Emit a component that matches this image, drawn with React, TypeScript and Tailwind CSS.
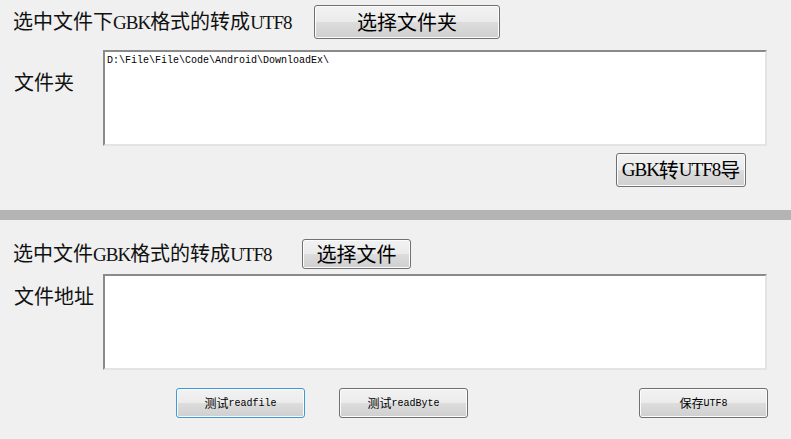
import React from "react";

const F = { fontFamily: '"Noto Sans CJK SC", "Liberation Serif", serif' };

function L({ children }: { children: React.ReactNode }) {
  return (
    <span className="text-[19px] tracking-[-1px]" style={{ fontFamily: '"Liberation Serif", serif' }}>
      {children}
    </span>
  );
}

function S({ children }: { children: React.ReactNode }) {
  return (
    <span className="text-[10px]" style={{ fontFamily: '"Liberation Mono", monospace' }}>
      {children}
    </span>
  );
}

function Btn({
  className = "",
  children,
  focus = false,
}: {
  className?: string;
  children: React.ReactNode;
  focus?: boolean;
}) {
  return (
    <div
      className={
        "flex items-center justify-center rounded-[3px] border text-black bg-[linear-gradient(to_bottom,#f2f2f2_0%,#ebebeb_50%,#dddddd_50%,#cfcfcf_100%)] shadow-[inset_0_0_0_1px_#fcfcfc] " +
        (focus ? "border-[#3c9ad8] " : "border-[#707070] ") +
        className
      }
      style={F}
    >
      {children}
    </div>
  );
}

function Box({ className = "", children }: { className?: string; children?: React.ReactNode }) {
  return (
    <div
      className={
        "bg-white border-t-2 border-l-2 border-t-[#8a8a8a] border-l-[#8a8a8a] border-r-2 border-b-2 border-r-[#e3e3e3] border-b-[#e3e3e3] " +
        className
      }
    >
      {children}
    </div>
  );
}

export default function App() {
  return (
    <div className="w-[791px] h-[439px] bg-[#f0f0f0] overflow-hidden text-[#111]" style={F}>
      <div className="h-[210px] flex flex-col">
        <div className="flex items-center pt-[5px]">
          <div className="w-[314px] pl-[13px] text-[20px] leading-[28px] whitespace-nowrap">
            选中文件下<L>GBK</L>格式的转成<L>UTF8</L>
          </div>
          <Btn className="w-[186px] h-[34px] text-[20px]">选择文件夹</Btn>
        </div>
        <div className="flex mt-[11px]">
          <div className="w-[103px] pl-[14px] pt-[18px] text-[20px] leading-[28px]">文件夹</div>
          <Box className="w-[664px] h-[96px] pl-[2px] pt-[3px]">
            <div className="text-[10px] leading-[12px] text-black" style={{ fontFamily: '"Liberation Mono", monospace' }}>
              D:\File\File\Code\Android\DownloadEx\
            </div>
          </Box>
        </div>
        <div className="flex justify-end pr-[45px] mt-[7px]">
          <Btn className="w-[130px] h-[34px] text-[20px]">
            <L>GBK</L>转<L>UTF8</L>导
          </Btn>
        </div>
      </div>
      <div className="h-[10px] bg-[#b4b4b4]" />
      <div className="flex flex-col">
        <div className="flex items-center mt-[19px]">
          <div className="w-[302px] pl-[13px] text-[20px] leading-[28px] whitespace-nowrap">
            选中文件<L>GBK</L>格式的转成<L>UTF8</L>
          </div>
          <Btn className="w-[109px] h-[30px] text-[20px]">选择文件</Btn>
        </div>
        <div className="flex mt-[5px]">
          <div className="w-[103px] pl-[14px] pt-[8px] text-[20px] leading-[28px]">文件地址</div>
          <Box className="w-[664px] h-[96px]" />
        </div>
        <div className="flex mt-[18px]">
          <div className="w-[176px]" />
          <Btn focus className="w-[129px] h-[30px] text-[12px]">
            测试<S>readfile</S>
          </Btn>
          <div className="w-[34px]" />
          <Btn className="w-[129px] h-[30px] text-[12px]">
            测试<S>readByte</S>
          </Btn>
          <div className="w-[171px]" />
          <Btn className="w-[129px] h-[30px] text-[12px]">
            保存<S>UTF8</S>
          </Btn>
        </div>
      </div>
    </div>
  );
}
